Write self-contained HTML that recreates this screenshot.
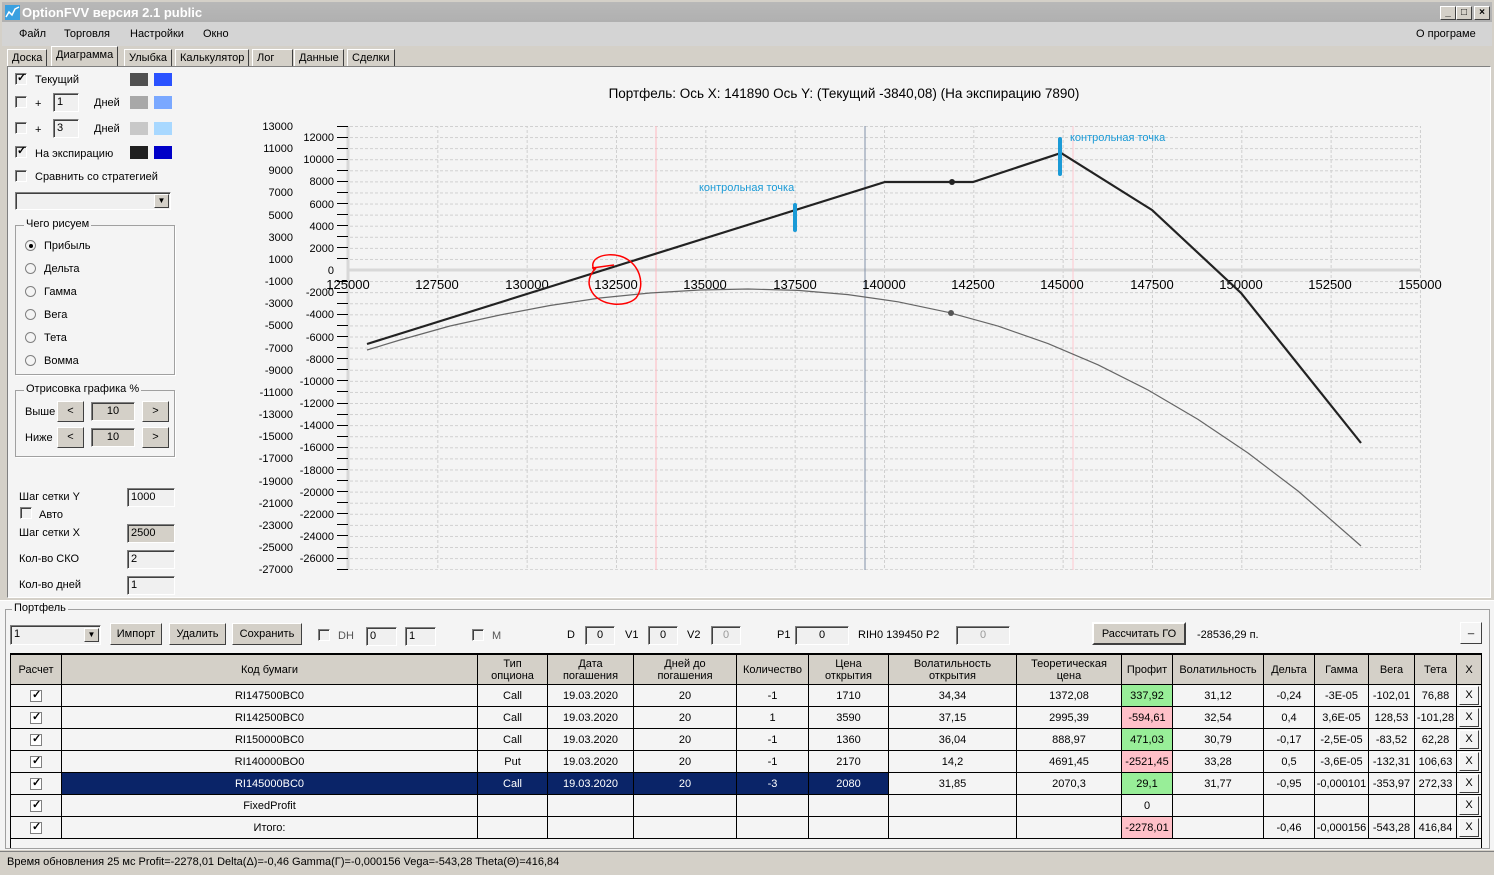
<!DOCTYPE html>
<html><head><meta charset="utf-8">
<style>
*{box-sizing:border-box}
body{margin:0;width:1494px;height:875px;overflow:hidden;background:#d4d0c8;font-family:"Liberation Sans",sans-serif;font-size:11px;color:#000;position:relative}
.a{position:absolute}
.title{left:0;top:0;width:1494px;height:22px;background:linear-gradient(#b8b8b8,#b0b0b0);border:2px solid #d4d0c8;border-bottom:0}
.title span{position:absolute;left:20px;top:3px;color:#fff;font-weight:bold;font-size:13px;font-family:"Liberation Sans",sans-serif}
.wb{top:4px;width:16px;height:14px;background:#d4d0c8;border:1px solid;border-color:#fff #404040 #404040 #fff;font-size:10px;text-align:center;line-height:12px;font-weight:bold}
.menu{left:2px;top:22px;width:1490px;height:24px;background:#d4d4d4}
.menu span{position:absolute;top:6px}
.tab{top:49px;height:18px;border:1px solid;border-color:#fff #404040 #d4d0c8 #fff;padding:2px 4px;background:#d4d0c8}
.panel{left:7px;top:66px;width:1484px;height:532px;background:#f4f4f4;border:1px solid;border-color:#808080 #fff #fff #808080}
.cb{width:12px;height:12px;border:1px solid;border-color:#808080 #fff #fff #808080;background:#f0f0f0;box-shadow:inset 1px 1px #404040}
.cb.c::after{content:"✓";position:absolute;left:1px;top:-3px;font-size:11px;font-weight:bold}
.ed{height:19px;border:1px solid;border-color:#808080 #fff #fff #808080;background:#f0f0f0;box-shadow:inset 1px 1px #404040;padding:2px 3px}
.sw{width:18px;height:13px}
.grp{border:1px solid #a0a0a0;box-shadow:1px 1px #fff}
.grp b{position:absolute;top:-8px;left:8px;background:#f4f4f4;font-weight:normal;padding:0 2px}
.rd{width:11px;height:11px;border-radius:50%;border:1px solid #808080;background:#f4f4f4}
.btn{background:#d4d0c8;border:1px solid;border-color:#fff #404040 #404040 #fff;text-align:center}
table{border-collapse:collapse;table-layout:fixed;font-size:11px;font-family:"Liberation Sans",sans-serif}
td{border:1px solid #000;text-align:center;height:22px;padding:0;white-space:nowrap;overflow:hidden;background:#f4f4f4}
th{border:1px solid #000;font-weight:normal;background:#d4d0c8;height:30px;line-height:12px;padding:0}
td.g{background:#98ee98}td.r{background:#ffc0c8}
tr.s td{background:#0a2468;color:#fff}
tr.s td.g{background:#98ee98;color:#000}
.x{display:inline-block;width:20px;height:19px;border:1px solid;border-color:#fff #404040 #404040 #fff;background:#f4f4f4;line-height:17px}
.ck{display:inline-block;width:12px;height:12px;border:1px solid #808080;background:#fff;position:relative;vertical-align:middle}
.ck::after{content:"✓";position:absolute;left:1px;top:-3px;font-size:11px;font-weight:bold;color:#000}
</style></head><body>
<div class="a title"><svg class="a" style="left:3px;top:3px" width="15" height="15"><rect width="15" height="15" fill="#3aa0e0"/><polyline points="1,12 4,7 7,10 10,4 14,2" stroke="#fff" stroke-width="1.5" fill="none"/></svg><span>OptionFVV версия 2.1 public</span>
<div class="a wb" style="left:1438px">_</div><div class="a wb" style="left:1454px">□</div><div class="a wb" style="left:1472px">×</div></div>
<div class="a menu"><span style="left:17px">Файл</span><span style="left:62px">Торговля</span><span style="left:128px">Настройки</span><span style="left:201px">Окно</span><span style="left:1414px">О програме</span></div>
<div class="a tab" style="left:7px">Доска</div>
<div class="a tab" style="left:51px;top:46px;height:21px;background:#d4d0c8;border-bottom:0;font-size:11px">Диаграмма</div>
<div class="a tab" style="left:124px">Улыбка</div>
<div class="a tab" style="left:175px">Калькулятор</div>
<div class="a tab" style="left:252px;width:41px">Лог</div>
<div class="a tab" style="left:294px">Данные</div>
<div class="a tab" style="left:347px">Сделки</div>
<div class="a panel"></div>

<!-- left controls -->
<div class="a cb c" style="left:15px;top:73px"></div><div class="a" style="left:35px;top:74px">Текущий</div>
<div class="a sw" style="left:130px;top:73px;background:#505050"></div><div class="a sw" style="left:154px;top:73px;background:#2a52ff"></div>
<div class="a cb" style="left:15px;top:96px"></div><div class="a" style="left:35px;top:98px">+</div><div class="a ed" style="left:53px;top:93px;width:26px">1</div><div class="a" style="left:94px;top:97px">Дней</div>
<div class="a sw" style="left:130px;top:96px;background:#a8a8a8"></div><div class="a sw" style="left:154px;top:96px;background:#7aa8ff"></div>
<div class="a cb" style="left:15px;top:122px"></div><div class="a" style="left:35px;top:124px">+</div><div class="a ed" style="left:53px;top:119px;width:26px">3</div><div class="a" style="left:94px;top:123px">Дней</div>
<div class="a sw" style="left:130px;top:122px;background:#c8c8c8"></div><div class="a sw" style="left:154px;top:122px;background:#a8d8ff"></div>
<div class="a cb c" style="left:15px;top:146px"></div><div class="a" style="left:35px;top:148px">На экспирацию</div>
<div class="a sw" style="left:130px;top:146px;background:#202020"></div><div class="a sw" style="left:154px;top:146px;background:#0000c8"></div>
<div class="a cb" style="left:15px;top:170px"></div><div class="a" style="left:35px;top:171px">Сравнить со стратегией</div>
<div class="a ed" style="left:15px;top:192px;width:156px;height:18px"></div><div class="a btn" style="left:154px;top:194px;width:15px;height:14px;font-size:8px;line-height:12px">▼</div>
<div class="a grp" style="left:15px;top:225px;width:160px;height:150px"><b>Чего рисуем</b></div>
<div class="a rd" style="left:25px;top:240px"></div><div class="a" style="left:29px;top:244px;width:4px;height:4px;background:#000;border-radius:50%"></div><div class="a" style="left:44px;top:240px">Прибыль</div>
<div class="a rd" style="left:25px;top:263px"></div><div class="a" style="left:44px;top:263px">Дельта</div>
<div class="a rd" style="left:25px;top:286px"></div><div class="a" style="left:44px;top:286px">Гамма</div>
<div class="a rd" style="left:25px;top:309px"></div><div class="a" style="left:44px;top:309px">Вега</div>
<div class="a rd" style="left:25px;top:332px"></div><div class="a" style="left:44px;top:332px">Тета</div>
<div class="a rd" style="left:25px;top:355px"></div><div class="a" style="left:44px;top:355px">Вомма</div>
<div class="a grp" style="left:15px;top:390px;width:160px;height:67px"><b>Отрисовка графика %</b></div>
<div class="a" style="left:25px;top:406px">Выше</div><div class="a btn" style="left:57px;top:401px;width:27px;height:21px;line-height:19px">&lt;</div><div class="a ed" style="left:91px;top:402px;width:44px;background:#d4d0c8;text-align:center">10</div><div class="a btn" style="left:142px;top:401px;width:27px;height:21px;line-height:19px">&gt;</div>
<div class="a" style="left:25px;top:432px">Ниже</div><div class="a btn" style="left:57px;top:427px;width:27px;height:21px;line-height:19px">&lt;</div><div class="a ed" style="left:91px;top:428px;width:44px;background:#d4d0c8;text-align:center">10</div><div class="a btn" style="left:142px;top:427px;width:27px;height:21px;line-height:19px">&gt;</div>
<div class="a" style="left:19px;top:491px">Шаг сетки Y</div><div class="a ed" style="left:127px;top:488px;width:48px">1000</div>
<div class="a cb" style="left:20px;top:507px"></div><div class="a" style="left:39px;top:509px">Авто</div>
<div class="a" style="left:19px;top:527px">Шаг сетки X</div><div class="a ed" style="left:127px;top:524px;width:48px;background:#d4d0c8">2500</div>
<div class="a" style="left:19px;top:553px">Кол-во СКО</div><div class="a ed" style="left:127px;top:550px;width:48px">2</div>
<div class="a" style="left:19px;top:579px">Кол-во дней</div><div class="a ed" style="left:127px;top:576px;width:48px">1</div>

<!-- chart -->
<svg class="a" style="left:0;top:0" width="1494" height="600" font-family="Liberation Sans, sans-serif" font-size="12">
<defs>
<pattern id="hp" x="0" y="126" width="1494" height="11.08" patternUnits="userSpaceOnUse"><line x1="0" y1="0.5" x2="1494" y2="0.5" stroke="#cfcfcf" stroke-dasharray="3,2"/></pattern>
<pattern id="vp" x="348" y="0" width="89.33" height="600" patternUnits="userSpaceOnUse"><line x1="0.5" y1="0" x2="0.5" y2="600" stroke="#cfcfcf" stroke-dasharray="3,2"/></pattern>
</defs>
<rect x="348" y="126" width="1073" height="444" fill="url(#hp)"/>
<rect x="348" y="126" width="1074" height="444" fill="url(#vp)"/>
<text x="844" y="98" font-size="13.5" text-anchor="middle">Портфель:  Ось X:  141890  Ось Y:  (Текущий -3840,08)  (На экспирацию  7890)</text>
<line x1="348" y1="126" x2="348" y2="570" stroke="#d8d8d8" stroke-width="3"/>
<line x1="348" y1="270" x2="1420" y2="270" stroke="#d8d8d8" stroke-width="3"/>
<line x1="656" y1="126" x2="656" y2="570" stroke="#ffb8c0"/>
<line x1="865" y1="126" x2="865" y2="570" stroke="#8090a8"/>
<line x1="1073" y1="126" x2="1073" y2="570" stroke="#ffc8d0"/>
<g stroke="#000"><path d="M337 126.5h11M337 137.5h11M337 148.5h11M337 159.5h11M337 170.5h11M337 181.5h11M337 192.5h11M337 203.5h11M337 214.5h11M337 225.5h11M337 236.5h11M337 247.5h11M337 258.5h11M337 281.5h11M337 292.5h11M337 303.5h11M337 314.5h11M337 325.5h11M337 336.5h11M337 347.5h11M337 358.5h11M337 369.5h11M337 380.5h11M337 391.5h11M337 403.5h11M337 414.5h11M337 425.5h11M337 436.5h11M337 447.5h11M337 458.5h11M337 469.5h11M337 480.5h11M337 491.5h11M337 502.5h11M337 513.5h11M337 524.5h11M337 535.5h11M337 547.5h11M337 558.5h11M337 569.5h11"/></g>
<g text-anchor="end" font-size="11">
<text x="293" y="130">13000</text><text x="293" y="152">11000</text><text x="293" y="174">9000</text><text x="293" y="196">7000</text><text x="293" y="219">5000</text><text x="293" y="241">3000</text><text x="293" y="263">1000</text><text x="293" y="285">-1000</text><text x="293" y="307">-3000</text><text x="293" y="329">-5000</text><text x="293" y="352">-7000</text><text x="293" y="374">-9000</text><text x="293" y="396">-11000</text><text x="293" y="418">-13000</text><text x="293" y="440">-15000</text><text x="293" y="462">-17000</text><text x="293" y="485">-19000</text><text x="293" y="507">-21000</text><text x="293" y="529">-23000</text><text x="293" y="551">-25000</text><text x="293" y="573">-27000</text>
<text x="334" y="141">12000</text><text x="334" y="163">10000</text><text x="334" y="185">8000</text><text x="334" y="208">6000</text><text x="334" y="230">4000</text><text x="334" y="252">2000</text><text x="334" y="274">0</text><text x="334" y="296">-2000</text><text x="334" y="318">-4000</text><text x="334" y="341">-6000</text><text x="334" y="363">-8000</text><text x="334" y="385">-10000</text><text x="334" y="407">-12000</text><text x="334" y="429">-14000</text><text x="334" y="451">-16000</text><text x="334" y="474">-18000</text><text x="334" y="496">-20000</text><text x="334" y="518">-22000</text><text x="334" y="540">-24000</text><text x="334" y="562">-26000</text>
</g>
<g text-anchor="middle" font-size="13">
<text x="348" y="289">125000</text><text x="437" y="289">127500</text><text x="527" y="289">130000</text><text x="616" y="289">132500</text><text x="705" y="289">135000</text><text x="795" y="289">137500</text><text x="884" y="289">140000</text><text x="973" y="289">142500</text><text x="1062" y="289">145000</text><text x="1152" y="289">147500</text><text x="1241" y="289">150000</text><text x="1330" y="289">152500</text><text x="1420" y="289">155000</text>
</g>
<polyline points="367,350 400,340 450,326 500,315 550,305.5 600,298 650,293 700,290 748,289 798,290.4 848,294.6 898,301.8 948,312.3 998,326.1 1048,343.6 1098,364.8 1148,390 1198,419.4 1248,453 1298,491 1361,546" fill="none" stroke="#666" stroke-width="1.2" stroke-linejoin="round"/>
<circle cx="951" cy="313" r="3" fill="#555"/>
<polyline points="367,344 885,182 952,182 973,182 1061,153 1152,210 1241,293 1361,443" fill="none" stroke="#222" stroke-width="2.2"/>
<circle cx="952" cy="182" r="3" fill="#222"/>
<line x1="795" y1="205" x2="795" y2="230" stroke="#1a9ad6" stroke-width="4" stroke-linecap="round"/>
<line x1="1060" y1="139" x2="1060" y2="174" stroke="#1a9ad6" stroke-width="4" stroke-linecap="round"/>
<text x="699" y="191" fill="#1a9ad6" font-size="11">контрольная точка</text>
<text x="1070" y="141" fill="#1a9ad6" font-size="11">контрольная точка</text>
<path d="M594 270 C588 258 605 252 620 256 C640 262 646 285 636 298 C626 308 600 306 592 292 C586 282 590 274 596 268 M592 268 L614 265" fill="none" stroke="#f00" stroke-width="1.5"/>
</svg>

<!-- portfolio -->
<div class="a" style="left:0;top:600px;width:1494px;height:250px;background:#f4f4f4;border-top:1px solid #fff"></div>
<div class="a grp" style="left:5px;top:609px;width:1485px;height:240px;box-shadow:none"><b style="left:6px">Портфель</b></div>
<div class="a ed" style="left:10px;top:625px;width:91px;height:20px">1</div><div class="a btn" style="left:84px;top:628px;width:15px;height:14px;font-size:8px;line-height:12px">▼</div>
<div class="a btn" style="left:110px;top:623px;width:52px;height:22px;line-height:20px">Импорт</div>
<div class="a btn" style="left:169px;top:623px;width:57px;height:22px;line-height:20px">Удалить</div>
<div class="a btn" style="left:232px;top:623px;width:70px;height:22px;line-height:20px">Сохранить</div>
<div class="a cb" style="left:318px;top:629px"></div><div class="a" style="left:338px;top:630px;color:#555">DH</div>
<div class="a ed" style="left:366px;top:627px;width:31px">0</div><div class="a ed" style="left:405px;top:627px;width:31px">1</div>
<div class="a cb" style="left:472px;top:629px"></div><div class="a" style="left:492px;top:630px;color:#555">M</div>
<div class="a" style="left:567px;top:629px">D</div><div class="a ed" style="left:585px;top:626px;width:30px;text-align:center">0</div>
<div class="a" style="left:625px;top:629px">V1</div><div class="a ed" style="left:648px;top:626px;width:30px;text-align:center">0</div>
<div class="a" style="left:687px;top:629px">V2</div><div class="a ed" style="left:711px;top:626px;width:30px;text-align:center;color:#999">0</div>
<div class="a" style="left:777px;top:629px">P1</div><div class="a ed" style="left:795px;top:626px;width:54px;text-align:center">0</div>
<div class="a" style="left:858px;top:629px">RIH0 139450  P2</div><div class="a ed" style="left:956px;top:626px;width:54px;text-align:center;color:#999">0</div>
<div class="a btn" style="left:1092px;top:622px;width:94px;height:23px;line-height:21px;border-width:2px">Рассчитать ГО</div>
<div class="a" style="left:1197px;top:629px">-28536,29 п.</div>
<div class="a btn" style="left:1460px;top:622px;width:22px;height:22px;background:#f4f4f4">_</div>
<div class="a" style="left:10px;top:653px;width:1472px;height:195px;border:1px solid #000;border-bottom:0"></div>
<table class="a" style="left:10px;top:654px;width:1471px">
<colgroup><col style="width:51px"><col style="width:416px"><col style="width:70px"><col style="width:86px"><col style="width:103px"><col style="width:72px"><col style="width:80px"><col style="width:128px"><col style="width:105px"><col style="width:51px"><col style="width:91px"><col style="width:51px"><col style="width:54px"><col style="width:46px"><col style="width:42px"><col style="width:25px"></colgroup>
<tr><th>Расчет</th><th>Код бумаги</th><th>Тип<br>опциона</th><th>Дата<br>погашения</th><th>Дней до<br>погашения</th><th>Количество</th><th>Цена<br>открытия</th><th>Волатильность<br>открытия</th><th>Теоретическая<br>цена</th><th>Профит</th><th>Волатильность</th><th>Дельта</th><th>Гамма</th><th>Вега</th><th>Тета</th><th>X</th></tr>
<tr><td><span class="ck"></span></td><td>RI147500BC0</td><td>Call</td><td>19.03.2020</td><td>20</td><td>-1</td><td>1710</td><td>34,34</td><td>1372,08</td><td class="g">337,92</td><td>31,12</td><td>-0,24</td><td>-3E-05</td><td>-102,01</td><td>76,88</td><td><span class="x">X</span></td></tr>
<tr><td><span class="ck"></span></td><td>RI142500BC0</td><td>Call</td><td>19.03.2020</td><td>20</td><td>1</td><td>3590</td><td>37,15</td><td>2995,39</td><td class="r">-594,61</td><td>32,54</td><td>0,4</td><td>3,6E-05</td><td>128,53</td><td>-101,28</td><td><span class="x">X</span></td></tr>
<tr><td><span class="ck"></span></td><td>RI150000BC0</td><td>Call</td><td>19.03.2020</td><td>20</td><td>-1</td><td>1360</td><td>36,04</td><td>888,97</td><td class="g">471,03</td><td>30,79</td><td>-0,17</td><td>-2,5E-05</td><td>-83,52</td><td>62,28</td><td><span class="x">X</span></td></tr>
<tr><td><span class="ck"></span></td><td>RI140000BO0</td><td>Put</td><td>19.03.2020</td><td>20</td><td>-1</td><td>2170</td><td>14,2</td><td>4691,45</td><td class="r">-2521,45</td><td>33,28</td><td>0,5</td><td>-3,6E-05</td><td>-132,31</td><td>106,63</td><td><span class="x">X</span></td></tr>
<tr class="s"><td style="background:#f4f4f4"><span class="ck"></span></td><td>RI145000BC0</td><td>Call</td><td>19.03.2020</td><td>20</td><td>-3</td><td>2080</td><td style="background:#f4f4f4;color:#000">31,85</td><td style="background:#f4f4f4;color:#000">2070,3</td><td class="g">29,1</td><td style="background:#f4f4f4;color:#000">31,77</td><td style="background:#f4f4f4;color:#000">-0,95</td><td style="background:#f4f4f4;color:#000">-0,000101</td><td style="background:#f4f4f4;color:#000">-353,97</td><td style="background:#f4f4f4;color:#000">272,33</td><td style="background:#f4f4f4;color:#000"><span class="x">X</span></td></tr>
<tr><td><span class="ck"></span></td><td>FixedProfit</td><td></td><td></td><td></td><td></td><td></td><td></td><td></td><td>0</td><td></td><td></td><td></td><td></td><td></td><td><span class="x">X</span></td></tr>
<tr><td><span class="ck"></span></td><td>Итого:</td><td></td><td></td><td></td><td></td><td></td><td></td><td></td><td class="r">-2278,01</td><td></td><td>-0,46</td><td>-0,000156</td><td>-543,28</td><td>416,84</td><td><span class="x">X</span></td></tr>
</table>
<div class="a" style="left:0;top:851px;width:1494px;height:24px;background:#d4d0c8;border-top:1px solid #808080"></div>
<div class="a" style="left:7px;top:856px">Время обновления 25 мс  Profit=-2278,01 Delta(Δ)=-0,46 Gamma(Γ)=-0,000156 Vega=-543,28 Theta(Θ)=416,84</div>
</body></html>
